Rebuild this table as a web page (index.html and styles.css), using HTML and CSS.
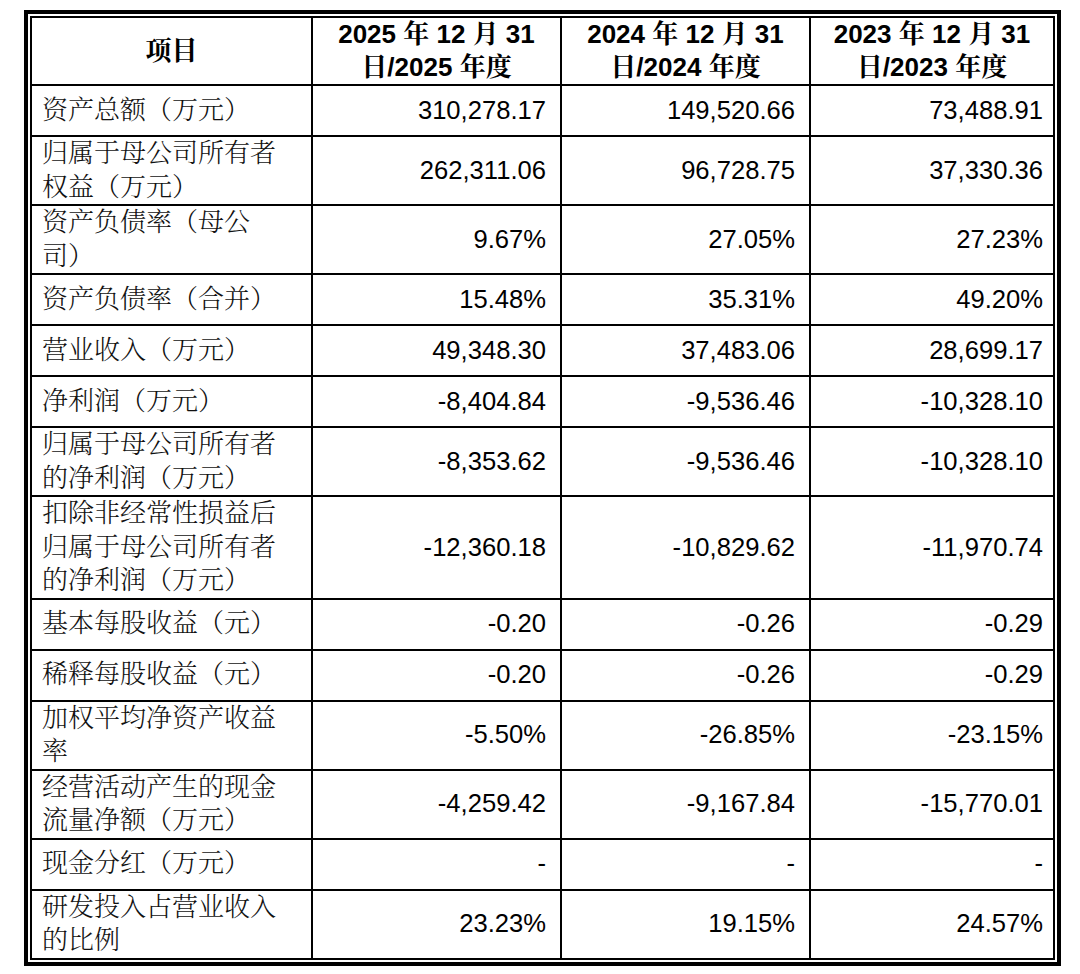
FILE: index.html
```html
<!DOCTYPE html>
<html lang="zh-CN">
<head>
<meta charset="utf-8">
<title>主要财务数据</title>
<link rel="stylesheet" href="styles.css">
</head>
<body>
<div class="frame">
  <div class="grid">
    <div class="cell head">项目</div>
    <div class="cell head">2025 年 12 月 31<br>日/2025 年度</div>
    <div class="cell head">2024 年 12 月 31<br>日/2024 年度</div>
    <div class="cell head">2023 年 12 月 31<br>日/2023 年度</div>

    <div class="cell label">资产总额（万元）</div>
    <div class="cell num">310,278.17</div>
    <div class="cell num">149,520.66</div>
    <div class="cell num last">73,488.91</div>

    <div class="cell label">归属于母公司所有者权益（万元）</div>
    <div class="cell num">262,311.06</div>
    <div class="cell num">96,728.75</div>
    <div class="cell num last">37,330.36</div>

    <div class="cell label">资产负债率（母公司）</div>
    <div class="cell num">9.67%</div>
    <div class="cell num">27.05%</div>
    <div class="cell num last">27.23%</div>

    <div class="cell label">资产负债率（合并）</div>
    <div class="cell num">15.48%</div>
    <div class="cell num">35.31%</div>
    <div class="cell num last">49.20%</div>

    <div class="cell label">营业收入（万元）</div>
    <div class="cell num">49,348.30</div>
    <div class="cell num">37,483.06</div>
    <div class="cell num last">28,699.17</div>

    <div class="cell label">净利润（万元）</div>
    <div class="cell num">-8,404.84</div>
    <div class="cell num">-9,536.46</div>
    <div class="cell num last">-10,328.10</div>

    <div class="cell label">归属于母公司所有者的净利润（万元）</div>
    <div class="cell num">-8,353.62</div>
    <div class="cell num">-9,536.46</div>
    <div class="cell num last">-10,328.10</div>

    <div class="cell label">扣除非经常性损益后归属于母公司所有者的净利润（万元）</div>
    <div class="cell num">-12,360.18</div>
    <div class="cell num">-10,829.62</div>
    <div class="cell num last">-11,970.74</div>

    <div class="cell label">基本每股收益（元）</div>
    <div class="cell num">-0.20</div>
    <div class="cell num">-0.26</div>
    <div class="cell num last">-0.29</div>

    <div class="cell label">稀释每股收益（元）</div>
    <div class="cell num">-0.20</div>
    <div class="cell num">-0.26</div>
    <div class="cell num last">-0.29</div>

    <div class="cell label">加权平均净资产收益率</div>
    <div class="cell num">-5.50%</div>
    <div class="cell num">-26.85%</div>
    <div class="cell num last">-23.15%</div>

    <div class="cell label">经营活动产生的现金流量净额（万元）</div>
    <div class="cell num">-4,259.42</div>
    <div class="cell num">-9,167.84</div>
    <div class="cell num last">-15,770.01</div>

    <div class="cell label">现金分红（万元）</div>
    <div class="cell num">-</div>
    <div class="cell num">-</div>
    <div class="cell num last">-</div>

    <div class="cell label">研发投入占营业收入的比例</div>
    <div class="cell num">23.23%</div>
    <div class="cell num">19.15%</div>
    <div class="cell num last">24.57%</div>
  </div>
</div>
</body>
</html>
```

FILE: styles.css
```css
html, body {
  margin: 0;
  padding: 0;
  background: #ffffff;
}

body {
  padding: 10px 0 0 24px;
  font-family: "Liberation Sans", "Noto Serif CJK SC", "Noto Sans CJK SC", sans-serif;
  color: #000;
}

.frame {
  width: 1037px;
  box-sizing: border-box;
  border: 4px solid #000;
  padding: 2px;
}

.grid {
  display: grid;
  grid-template-columns: 281px 249px 249px 244px;
  border-top: 2px solid #000;
  border-left: 2px solid #000;
}

.cell {
  box-sizing: border-box;
  border-right: 2px solid #000;
  border-bottom: 2px solid #000;
  min-height: 51px;
  display: flex;
  align-items: center;
  font-size: 26px;
  line-height: 33.5px;
  text-spacing-trim: space-all;
}

.head {
  justify-content: center;
  text-align: center;
  font-weight: bold;
  line-height: 33px;
  min-height: 68px;
}

.label {
  padding: 0 20px 0 10px;
  font-weight: 300;
  color: #111;
}

.num {
  justify-content: flex-end;
  padding-right: 14px;
  font-size: 25.6px;
}

.num.last {
  padding-right: 10px;
}
```
